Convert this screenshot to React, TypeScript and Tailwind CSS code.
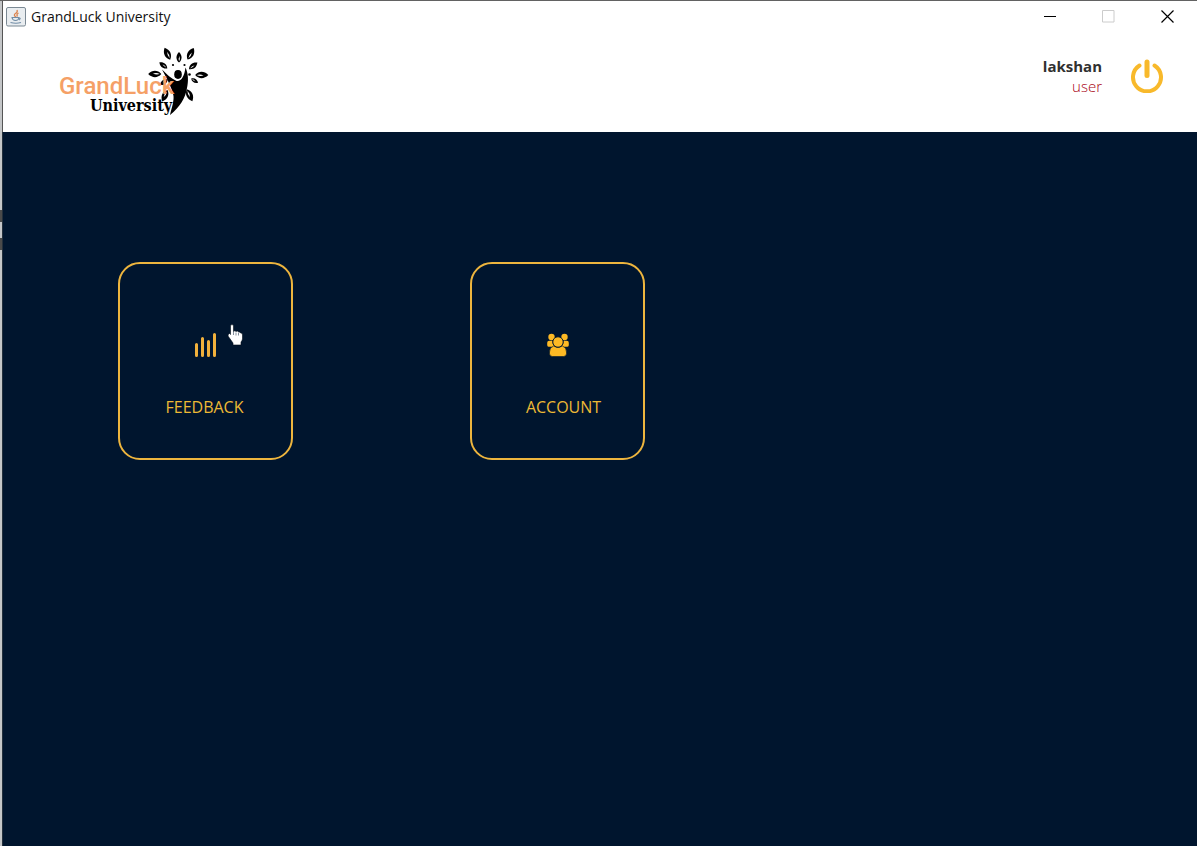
import type { ReactNode } from "react";

const leaves: [number, number, number, number][] = [
  // x, y, rotation, scale
  [27.5, 14, -25, 1.05],
  [39, 17.5, 0, 0.85],
  [50.5, 14, 28, 1.05],
  [23.5, 25.5, -52, 0.8],
  [53, 26, 52, 0.85],
  [15, 34, -90, 1.05],
  [61.5, 35, 90, 1.05],
  [24, 42, -125, 0.75],
  [54.5, 40.5, 122, 0.65],
  [49.5, 55, 155, 1.05],
  [25, 55.5, 205, 1],
];

function TreeMark() {
  return (
    <svg viewBox="0 0 80 80" className="absolute -top-2 left-[81px] h-20 w-20" aria-hidden="true">
      {leaves.map(([x, y, r, s]) => (
        <g key={`${x}-${y}`} transform={`translate(${x} ${y}) rotate(${r}) scale(${s})`}>
          <path d="M0-6.500C4-2.500 4 2.500 0 6C-4 2.500-4-2.500 0-6.500Z" fill="#000" />
          <path d="M.5-2Q1.600 1.500 .1 4.500Q-1 1.500 .5-2Z" fill="#fff" />
        </g>
      ))}
      <circle cx="33" cy="25" r="1.1" />
      <circle cx="44.5" cy="25" r="1.1" />
      <circle cx="49.5" cy="34.5" r="1.3" />
      <ellipse cx="38" cy="34.5" rx="3.8" ry="4.4" />
      <path d="M22 29.500C27 34.500 31 38.500 36.500 41C41 42 44.500 36 45.500 27.500C48.500 34 48.500 41 47 48C45.500 58 40 67 30 75C32 67 34 61 33.500 56C32 48 28 41 22 29.500Z" />
    </svg>
  );
}

function JavaIcon() {
  return (
    <svg viewBox="0 0 20 20" className="h-5 w-5" aria-hidden="true">
      <rect x="0.500" y="0.500" width="19" height="18.500" rx="1.500" fill="#e9edf0" stroke="#7b8994" />
      <path d="M11 3Q12 5 9.500 6.500T10 10M12.500 6Q10 7.500 11.500 9.500" fill="none" stroke="#dc8550" strokeWidth="1.300" />
      <path d="M6 10.500H13Q12.500 13.500 9.500 13.500T6 10.500ZM13 11Q15.500 11 13 13M4.500 15.500Q10 17 15 15.500" fill="none" stroke="#718da6" strokeWidth="1.100" />
    </svg>
  );
}

function BarsIcon() {
  return (
    <svg viewBox="0 0 24 26" className="h-[26px] w-6" fill="none" stroke="#f2b13c" strokeWidth="3" strokeLinecap="round" aria-hidden="true">
      <path d="M2.500 12.500V23.500M8.500 6.500V23.500M14.500 9.500V23.500M20.500 2.500V23.500" />
    </svg>
  );
}

function PeopleIcon() {
  return (
    <svg viewBox="0 0 24 26" className="h-[26px] w-6" fill="#fdb924" aria-hidden="true">
      <circle cx="5.500" cy="5" r="3.200" />
      <circle cx="18.500" cy="5" r="3.200" />
      <path d="M3.200 8.700H6.500Q6 12.500 9 14.800H2.500Q1.200 14.800 1.200 13V10.800Q1.200 8.700 3.200 8.700ZM20.800 8.700H17.500Q18 12.500 15 14.800H21.500Q22.800 14.800 22.800 13V10.800Q22.800 8.700 20.800 8.700Z" />
      <path d="M7.500 14Q12 17 16.500 14Q20.500 15.500 20.500 20V21.500Q20.500 24.500 17.500 24.500H6.500Q3.500 24.500 3.500 21.500V20Q3.500 15.500 7.500 14Z" stroke="#00152e" strokeWidth="0.600" />
      <circle cx="12" cy="10" r="5.200" stroke="#00152e" strokeWidth="0.900" />
    </svg>
  );
}

function PowerIcon() {
  return (
    <svg viewBox="0 0 34 34" className="h-[34px] w-[34px]" fill="none" stroke="#f8b92b" strokeWidth="4" strokeLinecap="round" aria-hidden="true">
      <path d="M9.500 6.500A14 14 0 1 0 24.500 6.500" />
      <path d="M17 3V16.500" strokeWidth="5" />
    </svg>
  );
}

function HandPointer() {
  return (
    <svg viewBox="0 0 17 24" className="pointer-events-none absolute top-[59px] left-[107px] h-6 w-[17px]" aria-hidden="true">
      <path d="M3.500 2.500Q5 .5 6.500 2.500V8.500Q8 7 9 8.500Q10.500 7.500 11.500 9Q13 8.500 13.500 10Q15.500 9.500 15.500 12V16Q15 18 14 19V22H6V20L1 13Q1 10.500 2.500 10.500L3.500 11.500Z" fill="#fff" stroke="#000b18" strokeWidth="0.600" />
      <path d="M6.500 8.500V12M9 9.500V12.500M11.500 10V12.500" stroke="#33445a" strokeWidth="0.600" />
    </svg>
  );
}

function Tile({ icon, children, overlay }: { icon: ReactNode; children: ReactNode; overlay?: ReactNode }) {
  return (
    <button
      type="button"
      className="relative flex h-[198px] w-[175px] cursor-pointer flex-col items-center gap-9 rounded-[22px] border-2 border-[#edb53e] pt-[68px] text-base leading-[26px] text-[#edb935]"
    >
      {icon}
      {children}
      {overlay}
    </button>
  );
}

export default function App() {
  return (
    <div className="flex min-h-screen border-t border-[#626262] font-['Open_Sans','Noto_Sans',sans-serif]">
      <div className="flex w-0.5 flex-col gap-4 bg-[#c4c6c8] pt-[209px]" aria-hidden="true">
        <span className="h-3 bg-[#4a4a4a]" />
        <span className="h-3 bg-[#4a4a4a]" />
      </div>
      <div className="flex flex-1 flex-col bg-white">
        <div className="flex h-8 items-start justify-between border-l border-[#555] pl-[3px]">
          <div className="flex items-center gap-[5px] pt-[5px]">
            <JavaIcon />
            <h1 className="text-sm leading-[22px] text-[#111]">GrandLuck University</h1>
          </div>
          <div className="flex h-[30px]">
            <button type="button" aria-label="Minimize" className="flex w-[58px] items-center justify-center">
              <svg viewBox="0 0 13 13" className="h-[13px] w-[13px]" stroke="#000" shapeRendering="crispEdges"><path d="M0 6.500H12" /></svg>
            </button>
            <button type="button" aria-label="Maximize" disabled className="flex w-[58px] items-center justify-center">
              <svg viewBox="0 0 13 13" className="h-[13px] w-[13px]" fill="none" stroke="#ccc"><path d="M.5.5H12V12H.5Z" /></svg>
            </button>
            <button type="button" aria-label="Close" className="flex w-[60px] items-center justify-center">
              <svg viewBox="0 0 13 13" className="h-[13px] w-[13px]" stroke="#000" strokeWidth="1.200"><path d="M.5.5L12.500 12.500M12.500.5L.5 12.500" /></svg>
            </button>
          </div>
        </div>

        <header className="flex h-[99px] items-start justify-between border-l border-[#555] pt-[15px] pr-[33px] pl-14">
          <div className="relative h-20 w-40">
            <TreeMark />
            <div className="relative flex flex-col pt-7">
              <span className="font-['Roboto',sans-serif] text-2xl leading-5 font-medium text-[#f5a066]">GrandLuck</span>
              <span className="pl-[31px] font-['DejaVu_Serif_Condensed','DejaVu_Serif',serif] text-base leading-5 font-bold text-black">University</span>
            </div>
          </div>
          <div className="flex gap-7 pt-2">
            <div className="text-right text-[15px] leading-5">
              <p className="font-bold text-[#303030]">lakshan</p>
              <p className="font-light text-[#a80012]">user</p>
            </div>
            <button type="button" aria-label="Log out" className="mt-[3px] h-[34px] w-[34px] cursor-pointer">
              <PowerIcon />
            </button>
          </div>
        </header>

        <main className="flex flex-1 flex-wrap content-start gap-x-[177px] gap-y-16 border-l border-[#24303c] bg-[#00152e] px-[115px] pt-[130px]">
          <Tile icon={<BarsIcon />} overlay={<HandPointer />}>
            <span className="pr-0.5">FEEDBACK</span>
          </Tile>
          <Tile icon={<PeopleIcon />}>
            <span className="pl-3">ACCOUNT</span>
          </Tile>
        </main>
      </div>
    </div>
  );
}
